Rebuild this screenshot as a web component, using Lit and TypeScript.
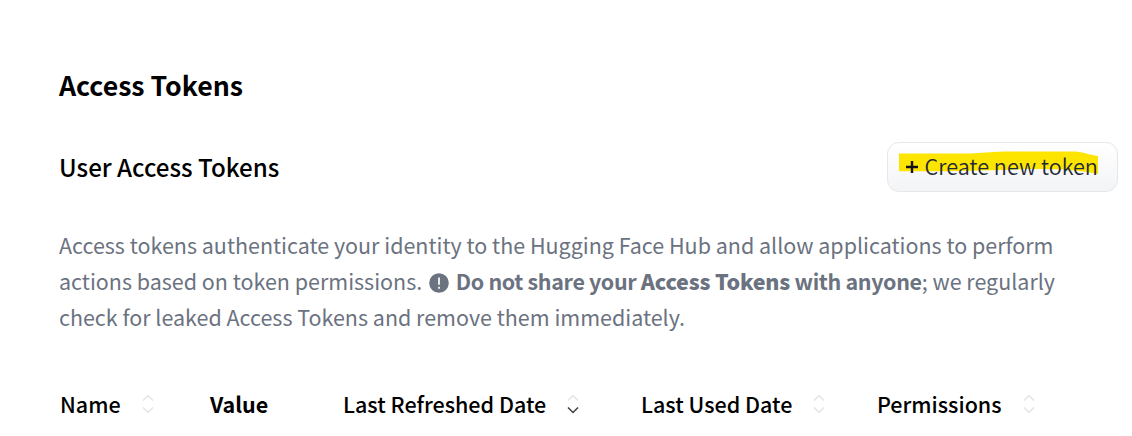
import { LitElement, html, css, nothing } from "lit";
import { customElement, property } from "lit/decorators.js";

@customElement("sort-arrows")
class SortArrows extends LitElement {
  @property() direction = "";
  static styles = css`
    :host { display: block; width: 12px; height: 20px; }
    svg { display: block; }
    path { fill: none; stroke: #dfe1e5; stroke-width: 1.2; }
    .on { stroke: #3c3f45; stroke-width: 1.5; }
  `;
  render() {
    return html`<svg width="12" height="20" viewBox="0 0 12 20">
      <path class=${this.direction === "asc" ? "on" : ""} d="M1 6.5 6 1.5l5 5" />
      <path class=${this.direction === "desc" ? "on" : ""} d="M1 13.5l5 5 5-5" />
    </svg>`;
  }
}

@customElement("app-root")
class AppRoot extends LitElement {
  static styles = css`
    :host {
      display: block;
      box-sizing: border-box;
      height: 436px;
      padding: 65px 14px 0 59px;
      overflow: hidden;
      background: #fff;
      color: #000;
      font-family: "Noto Sans CJK SC", "Noto Sans", sans-serif;
      white-space: nowrap;
    }
    h1, h2 { margin: 0; }
    h1 { font-size: 26.7px; line-height: 40px; font-weight: 700; }
    .bar { display: flex; justify-content: space-between; align-items: center; height: 50px; margin-top: 37px; }
    h2 { font-size: 24.15px; line-height: 36px; font-weight: 500; }
    button {
      position: relative;
      box-sizing: border-box;
      width: 231px;
      height: 50px;
      padding: 0 0 0 18px;
      display: flex;
      align-items: center;
      border: 1px solid #e5e7eb;
      border-radius: 12px;
      background: linear-gradient(#fff, #f3f4f6);
      font: 350 21.65px/36px "Noto Sans CJK SC", sans-serif;
      color: #1f2937;
    }
    .mark { position: absolute; left: 11px; top: 7px; }
    .label { position: relative; display: flex; align-items: center; gap: 6.5px; }
    .text { padding-bottom: 2px; }
    .intro { margin-top: 35px; font-size: 21.48px; line-height: 36px; color: #6b7280; }
    .line { height: 36px; }
    .notice { font-weight: 700; letter-spacing: -0.34px; }
    .notice b { letter-spacing: -0.2px; }
    .warn { display: inline-block; vertical-align: -3px; margin: 0 2px 0 2px; }
    .cols { display: grid; grid-template-columns: 150px 133px 298px 236px 170px; padding-left: 1px; margin-top: 51px; }
    .col { display: flex; align-items: center; gap: 21px; font-size: 21.5px; line-height: 36px; font-weight: 500; }
    .strong { font-weight: 700; }
  `;

  private columns = [
    { name: "Name", sort: true },
    { name: "Value", sort: false },
    { name: "Last Refreshed Date", sort: true, direction: "desc" },
    { name: "Last Used Date", sort: true },
    { name: "Permissions", sort: true },
  ];

  render() {
    return html`
      <h1>Access Tokens</h1>
      <div class="bar">
        <h2>User Access Tokens</h2>
        <button>
          <svg class="mark" width="200" height="26" viewBox="0 0 200 26">
            <path fill="#fde500" d="M0 3.5H70C85 3.3 90 2 105 1.6H176C184 2 190 5 199 6V24L188 22C160 18 130 19 100 20C70 21 30 21.5 0 21.3Z" />
          </svg>
          <span class="label">
            <svg width="12" height="12" viewBox="0 0 12 12"><path d="M6 0v12M0 6h12" stroke="#111" stroke-width="2.4" /></svg>
            <span class="text">Create new token</span>
          </span>
        </button>
      </div>
      <div class="intro">
        <div class="line">Access tokens authenticate your identity to the Hugging Face Hub and allow applications to perform</div>
        <div class="line">actions based on token permissions. <svg class="warn" width="20" height="20" viewBox="0 0 20 20"><circle cx="10" cy="10" r="9.8" fill="#6b7280" /><path d="M10 4.5v7.3M10 13.8v2" stroke="#fff" stroke-width="1.7" /></svg> <span class="notice">Do not share your <b>Access Tokens</b> with anyone</span>; we regularly</div>
        <div class="line">check for leaked Access Tokens and remove them immediately.</div>
      </div>
      <div class="cols">
        ${this.columns.map((c) => html`<div class="col ${c.sort ? "" : "strong"}">
          <span>${c.name}</span>${c.sort ? html`<sort-arrows .direction=${c.direction ?? ""}></sort-arrows>` : nothing}
        </div>`)}
      </div>
    `;
  }
}
